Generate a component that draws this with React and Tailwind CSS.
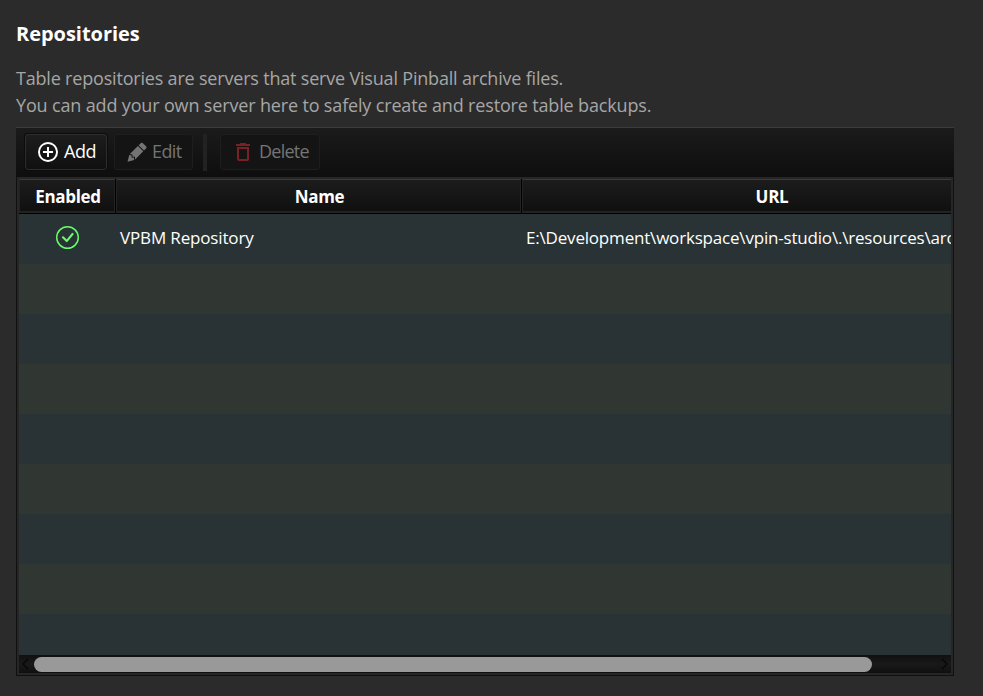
import React from 'react';
import { BsCheckCircle } from 'react-icons/bs';

function Icon({ d, className }) {
  return (
    <svg viewBox="0 0 24 24" width="24" height="24" fill="currentColor" className={`shrink-0 ${className}`}>
      <path d={d} />
    </svg>
  );
}

const PLUS = 'M12 20c-4.41 0-8-3.59-8-8s3.59-8 8-8 8 3.59 8 8-3.59 8-8 8m0-18A10 10 0 0 0 2 12a10 10 0 0 0 10 10 10 10 0 0 0 10-10A10 10 0 0 0 12 2m1 5h-2v4H7v2h4v4h2v-4h4v-2h-4V7z';
const PENCIL = 'M16.84 2.73C16.45 2.73 16.07 2.88 15.77 3.17L13.65 5.29L18.95 10.6L21.07 8.5C21.67 7.89 21.67 6.94 21.07 6.36L17.9 3.17C17.6 2.88 17.22 2.73 16.84 2.73M12.94 6L4.84 14.11L7.4 14.39L7.58 16.68L9.86 16.85L10.15 19.41L18.25 11.3M4.25 15.04L2.5 21.73L9.2 19.94L8.96 17.78L6.65 17.61L6.47 15.29';
const TRASH = 'M6 19a2 2 0 0 0 2 2h8a2 2 0 0 0 2-2V7H6v12M8 9h8v10H8V9m7.5-5-1-1h-5l-1 1H5v2h14V4h-3.5z';

const rows = [0, 1, 2, 3, 4, 5, 6, 7, 8];

export default function App() {
  return (
    <div className="flex h-[696px] w-[983px] flex-col overflow-hidden bg-[#2b2b2b] pl-4 font-['Open_Sans','Noto_Sans',sans-serif] text-white">
      <h1 className="mt-[20px] h-[27px] text-[20px] leading-[27px] font-bold tracking-[-0.03px] whitespace-nowrap">Repositories</h1>
      <div className="mt-[18px] h-[62px] text-[18px] leading-[27px] whitespace-nowrap text-[#a6a6a6]">
        <p className="tracking-[-0.19px]">Table repositories are servers that serve Visual Pinball archive files.</p>
        <p className="tracking-[-0.155px]">You can add your own server here to safely create and restore table backups.</p>
      </div>

      <div className="flex h-[50px] w-[938px] shrink-0 items-start border-t border-[#3c3c3c] bg-linear-to-b from-[#1b1b1b] to-[#0e0e0e] pt-[6px] pl-[9px] text-[18px] tracking-[-0.4px]">
        <button className="flex h-[36px] w-[82px] items-center rounded-[3px] border border-[#2d2d2d] bg-linear-to-b from-[#1d1d1d] to-[#101010] pb-px pl-[9.5px] shadow-[0_0_0_1px_#0c0c0c]">
          <Icon d={PLUS} className="text-white" />
          <span className="ml-[4.5px]">Add</span>
        </button>
        <button className="ml-[7px] flex h-[36px] w-[79px] items-center rounded-[3px] border border-[#1e1e1e] bg-[#141414] pb-px pl-[9.5px] text-[#747474]">
          <Icon d={PENCIL} />
          <span className="ml-[3.5px] tracking-[-0.6px]">Edit</span>
        </button>
        <div className="ml-[10px] h-[37px] w-[4px] bg-[#222222]" />
        <button className="ml-[13px] flex h-[36px] w-[100px] items-center rounded-[3px] border border-[#1e1e1e] bg-[#141414] pb-px pl-[9.5px] text-[#747474]">
          <Icon d={TRASH} className="text-[#7b2024]" />
          <span className="ml-[4.5px] tracking-[-0.75px]">Delete</span>
        </button>
      </div>

      <div className="flex h-[499px] w-[938px] shrink-0 flex-col border border-t-0 border-[#101010] bg-[#262626] px-[2px] pt-[2px] pb-[2px]">
        <div className="flex h-[35px] shrink-0 border-b border-black bg-black text-[17px] font-bold">
          <div className="flex w-[96px] items-center justify-center border-x border-t border-b-2 border-[#232323] border-t-[#3a3a3a] bg-linear-to-b from-[#1c1c1c] to-[#101010] pt-[2px] pl-[2px] tracking-[-0.3px]">Enabled</div>
          <div className="ml-px flex w-[405px] items-center justify-center border-x border-t border-b-2 border-[#232323] border-t-[#3a3a3a] bg-linear-to-b from-[#1c1c1c] to-[#101010] pt-[2px] pl-[2px] tracking-[-0.3px]">Name</div>
          <div className="ml-px flex flex-1 items-center justify-center border-t border-b-2 border-l border-[#232323] border-t-[#3a3a3a] bg-linear-to-b from-[#1c1c1c] to-[#101010] pt-[2px] pl-[70px] tracking-[-0.3px]">URL</div>
        </div>
        <div className="h-[441px] shrink-0 overflow-hidden">
          {rows.map((i) => (
            <div key={i} className={`flex h-[50px] text-[17px] whitespace-nowrap ${i % 2 ? 'bg-[#303632]' : 'bg-[#293335]'}`}>
              {i === 0 && (
                <>
                  <div className="flex w-[97px] items-center justify-center pb-[3px]">
                    <BsCheckCircle size={23} color="#66ff66" />
                  </div>
                  <div className="w-[406px] pl-[4px] leading-[47px] tracking-[-0.15px]">VPBM Repository</div>
                  <div className="flex-1 overflow-hidden pl-[4px] leading-[47px] tracking-[-0.19px]">E:\Development\workspace\vpin-studio\.\resources\arc</div>
                </>
              )}
            </div>
          ))}
        </div>
        <div className="flex h-[18px] shrink-0 items-center bg-linear-to-b from-[#101010] via-[#191919] to-[#101010]">
          <svg width="15" height="18" fill="none" stroke="#080808" strokeWidth="1.5"><path d="M9 4 4 9l5 5" /></svg>
          <div className="h-[15px] w-[838px] rounded-full bg-[#999999]" />
          <svg className="ml-auto" width="14" height="18" fill="none" stroke="#080808" strokeWidth="1.5"><path d="m5 4 5 5-5 5" /></svg>
        </div>
      </div>
    </div>
  );
}
